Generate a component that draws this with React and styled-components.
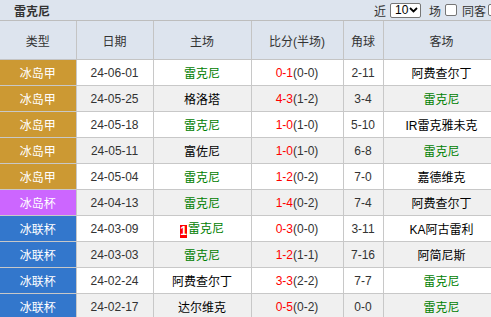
import React from "react";
import styled, { createGlobalStyle } from "styled-components";

const GlobalStyle = createGlobalStyle`
    html, body {
        margin: 0;
        padding: 0;
        overflow: hidden;
        background: #fff;
    }
    body {
        font-family: "Liberation Sans", "Noto Sans CJK SC", sans-serif;
        font-size: 12px;
        color: #333;
    }
`;

const Panel = styled.div`
    width: 500px;
`;

const TitleBar = styled.div`
    display: flex;
    align-items: center;
    justify-content: space-between;
    height: 20px;
    padding-left: 14px;
    background: #dde4ee;
    border-bottom: 1px solid #bdbdbd;
`;

const Title = styled.span`
    font-weight: bold;
    font-size: 12px;
    color: #333;
`;

const Filter = styled.div`
    display: flex;
    align-items: center;
    font-size: 12px;
    color: #333;
`;

const Select = styled.span`
    display: inline-flex;
    align-items: center;
    justify-content: space-between;
    box-sizing: border-box;
    width: 31px;
    height: 15px;
    padding: 0 2px 0 4px;
    margin: 0 8px 0 4px;
    background: #fff;
    border: 1px solid #767676;
    border-radius: 2px;
    color: #000;
    font-size: 12px;
`;

const Check = styled.span`
    display: inline-block;
    box-sizing: border-box;
    width: 12px;
    height: 12px;
    background: #fff;
    border: 1px solid #767676;
    border-radius: 2px;
    margin: 0 ${({ $last }) => ($last ? "0" : "5px")} 0 ${({ $last }) => ($last ? "2px" : "4px")};
`;

const Table = styled.table`
    width: 500px;
    table-layout: fixed;
    border-collapse: collapse;
`;

const Th = styled.th`
    height: 38px;
    padding: 0;
    background: #dde4ee;
    border: 1px solid #c4c4c4;
    border-top: none;
    font-weight: normal;
    color: #333;
    text-align: center;
    &:first-child {
        border-left: none;
    }
`;

const Row = styled.tr`
    background: ${({ $alt }) => ($alt ? "#f0f0f0" : "#fff")};
`;

const Td = styled.td`
    height: 25px;
    padding: 0;
    border: 1px solid #c8c8c8;
    text-align: center;
    white-space: nowrap;
    color: ${({ $color }) => $color || "#333"};
    &:first-child {
        border-left: none;
    }
`;

const TypeCell = styled(Td)`
    background: ${({ $bg }) => $bg};
    color: #fff;
`;

const Team = styled.span`
    color: ${({ $home }) => ($home ? "#008000" : "#000")};
`;

const Goals = styled.span`
    color: #f00;
`;

const RedCard = styled.span`
    display: inline-block;
    width: 7px;
    height: 13px;
    line-height: 13px;
    background: #f00;
    color: #fff;
    font-size: 12px;
    font-weight: bold;
    vertical-align: -2px;
    margin-right: 1px;
`;

const TYPE_COLORS = {
    冰岛甲: "#cc9933",
    冰岛杯: "#cc66ff",
    冰联杯: "#3377cc",
};

const matches = [
    { type: "冰岛甲", date: "24-06-01", home: "雷克尼", ft: "0-1", ht: "0-0", corner: "2-11", away: "阿费查尔丁" },
    { type: "冰岛甲", date: "24-05-25", home: "格洛塔", ft: "4-3", ht: "1-2", corner: "3-4", away: "雷克尼" },
    { type: "冰岛甲", date: "24-05-18", home: "雷克尼", ft: "1-0", ht: "1-0", corner: "5-10", away: "IR雷克雅未克" },
    { type: "冰岛甲", date: "24-05-11", home: "富佐尼", ft: "1-0", ht: "1-0", corner: "6-8", away: "雷克尼" },
    { type: "冰岛甲", date: "24-05-04", home: "雷克尼", ft: "1-2", ht: "0-2", corner: "7-0", away: "嘉德维克" },
    { type: "冰岛杯", date: "24-04-13", home: "雷克尼", ft: "1-4", ht: "0-2", corner: "7-4", away: "阿费查尔丁" },
    { type: "冰联杯", date: "24-03-09", home: "雷克尼", red: 1, ft: "0-3", ht: "0-0", corner: "3-11", away: "KA阿古雷利" },
    { type: "冰联杯", date: "24-03-03", home: "雷克尼", ft: "1-2", ht: "1-1", corner: "7-16", away: "阿简尼斯" },
    { type: "冰联杯", date: "24-02-24", home: "阿费查尔丁", ft: "3-3", ht: "2-2", corner: "7-7", away: "雷克尼" },
    { type: "冰联杯", date: "24-02-17", home: "达尔维克", ft: "0-5", ht: "0-2", corner: "0-0", away: "雷克尼" },
];

const TEAM = "雷克尼";

export default function App() {
    return (
        <Panel>
            <GlobalStyle />
            <TitleBar>
                <Title>雷克尼</Title>
                <Filter>
                    近
                    <Select>
                        10
                        <svg width="9" height="6" viewBox="0 0 9 6">
                            <path d="M1 1 L4.5 4.5 L8 1" fill="none" stroke="#000" strokeWidth="1.8" />
                        </svg>
                    </Select>
                    场<Check />同客<Check $last />
                </Filter>
            </TitleBar>
            <Table>
                <colgroup>
                    <col style={{ width: 76 }} />
                    <col style={{ width: 77 }} />
                    <col style={{ width: 98 }} />
                    <col style={{ width: 92 }} />
                    <col style={{ width: 40 }} />
                    <col style={{ width: 117 }} />
                </colgroup>
                <thead>
                    <tr>
                        <Th>类型</Th>
                        <Th>日期</Th>
                        <Th>主场</Th>
                        <Th>比分(半场)</Th>
                        <Th>角球</Th>
                        <Th>客场</Th>
                    </tr>
                </thead>
                <tbody>
                    {matches.map((m, i) => (
                        <Row key={m.date} $alt={i % 2 === 1}>
                            <TypeCell $bg={TYPE_COLORS[m.type]}>{m.type}</TypeCell>
                            <Td>{m.date}</Td>
                            <Td>
                                {m.red && <RedCard>{m.red}</RedCard>}
                                <Team $home={m.home === TEAM}>{m.home}</Team>
                            </Td>
                            <Td>
                                <Goals>{m.ft}</Goals>({m.ht})
                            </Td>
                            <Td>{m.corner}</Td>
                            <Td>
                                <Team $home={m.away === TEAM}>{m.away}</Team>
                            </Td>
                        </Row>
                    ))}
                </tbody>
            </Table>
        </Panel>
    );
}
